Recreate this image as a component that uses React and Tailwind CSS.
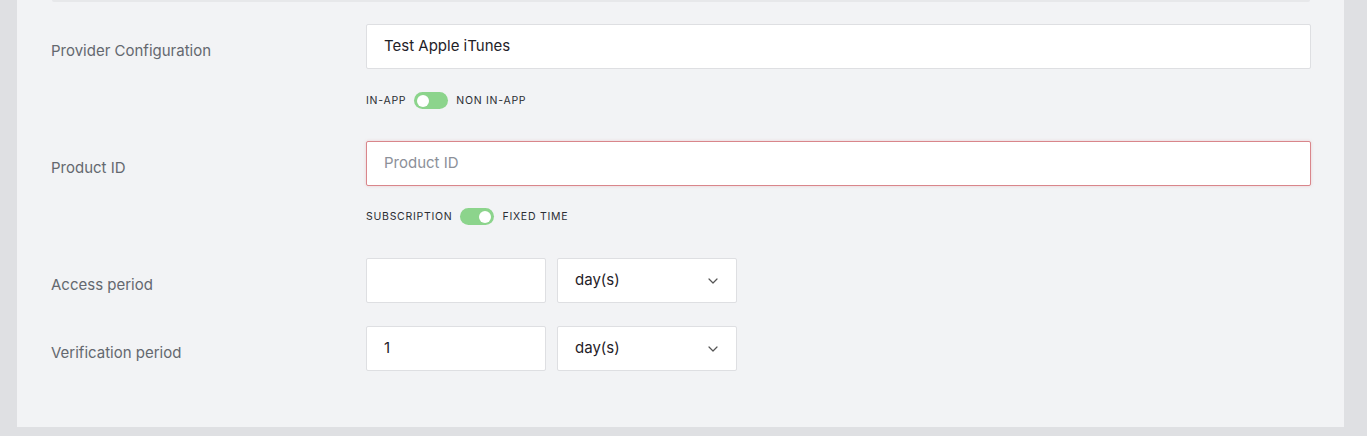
import React, { useState } from 'react';

const font = { fontFamily: 'Inter, "Noto Sans", sans-serif' };

const Chevron = () => (
  <svg width="10" height="6" viewBox="0 0 10 6" fill="none" className="text-[#555]">
    <path d="M1 1l4 4 4-4" stroke="currentColor" strokeWidth="1.2" strokeLinecap="round" strokeLinejoin="round" />
  </svg>
);

const Toggle = ({ left, right, on, onChange }) => (
  <div className="flex items-center gap-[8px] text-[10.5px] tracking-[0.07em] text-[#2b2d33] uppercase">
    <span>{left}</span>
    <button
      onClick={onChange}
      className={`w-[34px] h-[17px] rounded-full bg-[#8cd48c] flex items-center px-[3px] ${on ? 'justify-end' : 'justify-start'}`}
    >
      <span className="w-[12px] h-[12px] rounded-full bg-white" />
    </button>
    <span>{right}</span>
  </div>
);

const Field = ({ label, children }) => (
  <div className="flex items-center">
    <div className="w-[315px] pt-[10px] text-[15px] text-[#64686f]">{label}</div>
    <div className="flex-1">{children}</div>
  </div>
);

const UnitSelect = () => (
  <div className="w-[180px] h-[45px] bg-white border border-[#dedfe2] rounded-[2px] flex items-center justify-between pl-[17px] pr-[18px] text-[15px] text-[#1f2228]">
    <span>day(s)</span>
    <Chevron />
  </div>
);

export default function App() {
  const [inApp, setInApp] = useState(false);
  const [fixed, setFixed] = useState(true);

  return (
    <div className="min-h-[436px] bg-[#dfe0e3] pl-[17px] pr-[23px] pb-[9px]" style={font}>
      <div className="bg-[#f2f3f5] h-[427px] pl-[34px] pr-[33px]">
        <div className="h-[2px] mx-[1px] bg-[#e7e8ea] rounded-b-[3px]" />

        <div className="pt-[22px]">
          <Field label="Provider Configuration">
            <div className="h-[45px] bg-white border border-[#dedfe2] rounded-[2px] flex items-center px-[17px] text-[15px] text-[#1f2228]">
              Test Apple iTunes
            </div>
          </Field>
        </div>

        <div className="pl-[315px] pt-[23px] h-[72px]">
          <Toggle left="In-App" right="Non In-App" on={inApp} onChange={() => setInApp(!inApp)} />
        </div>

        <Field label="Product ID">
          <div className="h-[45px] bg-white border border-[#d9868b] rounded-[2px] shadow-[0_0_3px_rgba(217,134,139,0.35)] flex items-center px-[17px] text-[15px] text-[#8c9099]">
            Product ID
          </div>
        </Field>

        <div className="pl-[315px] pt-[22px] h-[72px]">
          <Toggle left="Subscription" right="Fixed Time" on={fixed} onChange={() => setFixed(!fixed)} />
        </div>

        <div className="flex flex-col gap-[23px]">
          <Field label="Access period">
            <div className="flex gap-[11px]">
              <div className="w-[180px] h-[45px] bg-white border border-[#dedfe2] rounded-[2px]" />
              <UnitSelect />
            </div>
          </Field>
          <Field label="Verification period">
            <div className="flex gap-[11px]">
              <div className="w-[180px] h-[45px] bg-white border border-[#dedfe2] rounded-[2px] flex items-center px-[17px] text-[15px] text-[#1f2228]">
                1
              </div>
              <UnitSelect />
            </div>
          </Field>
        </div>
      </div>
    </div>
  );
}
